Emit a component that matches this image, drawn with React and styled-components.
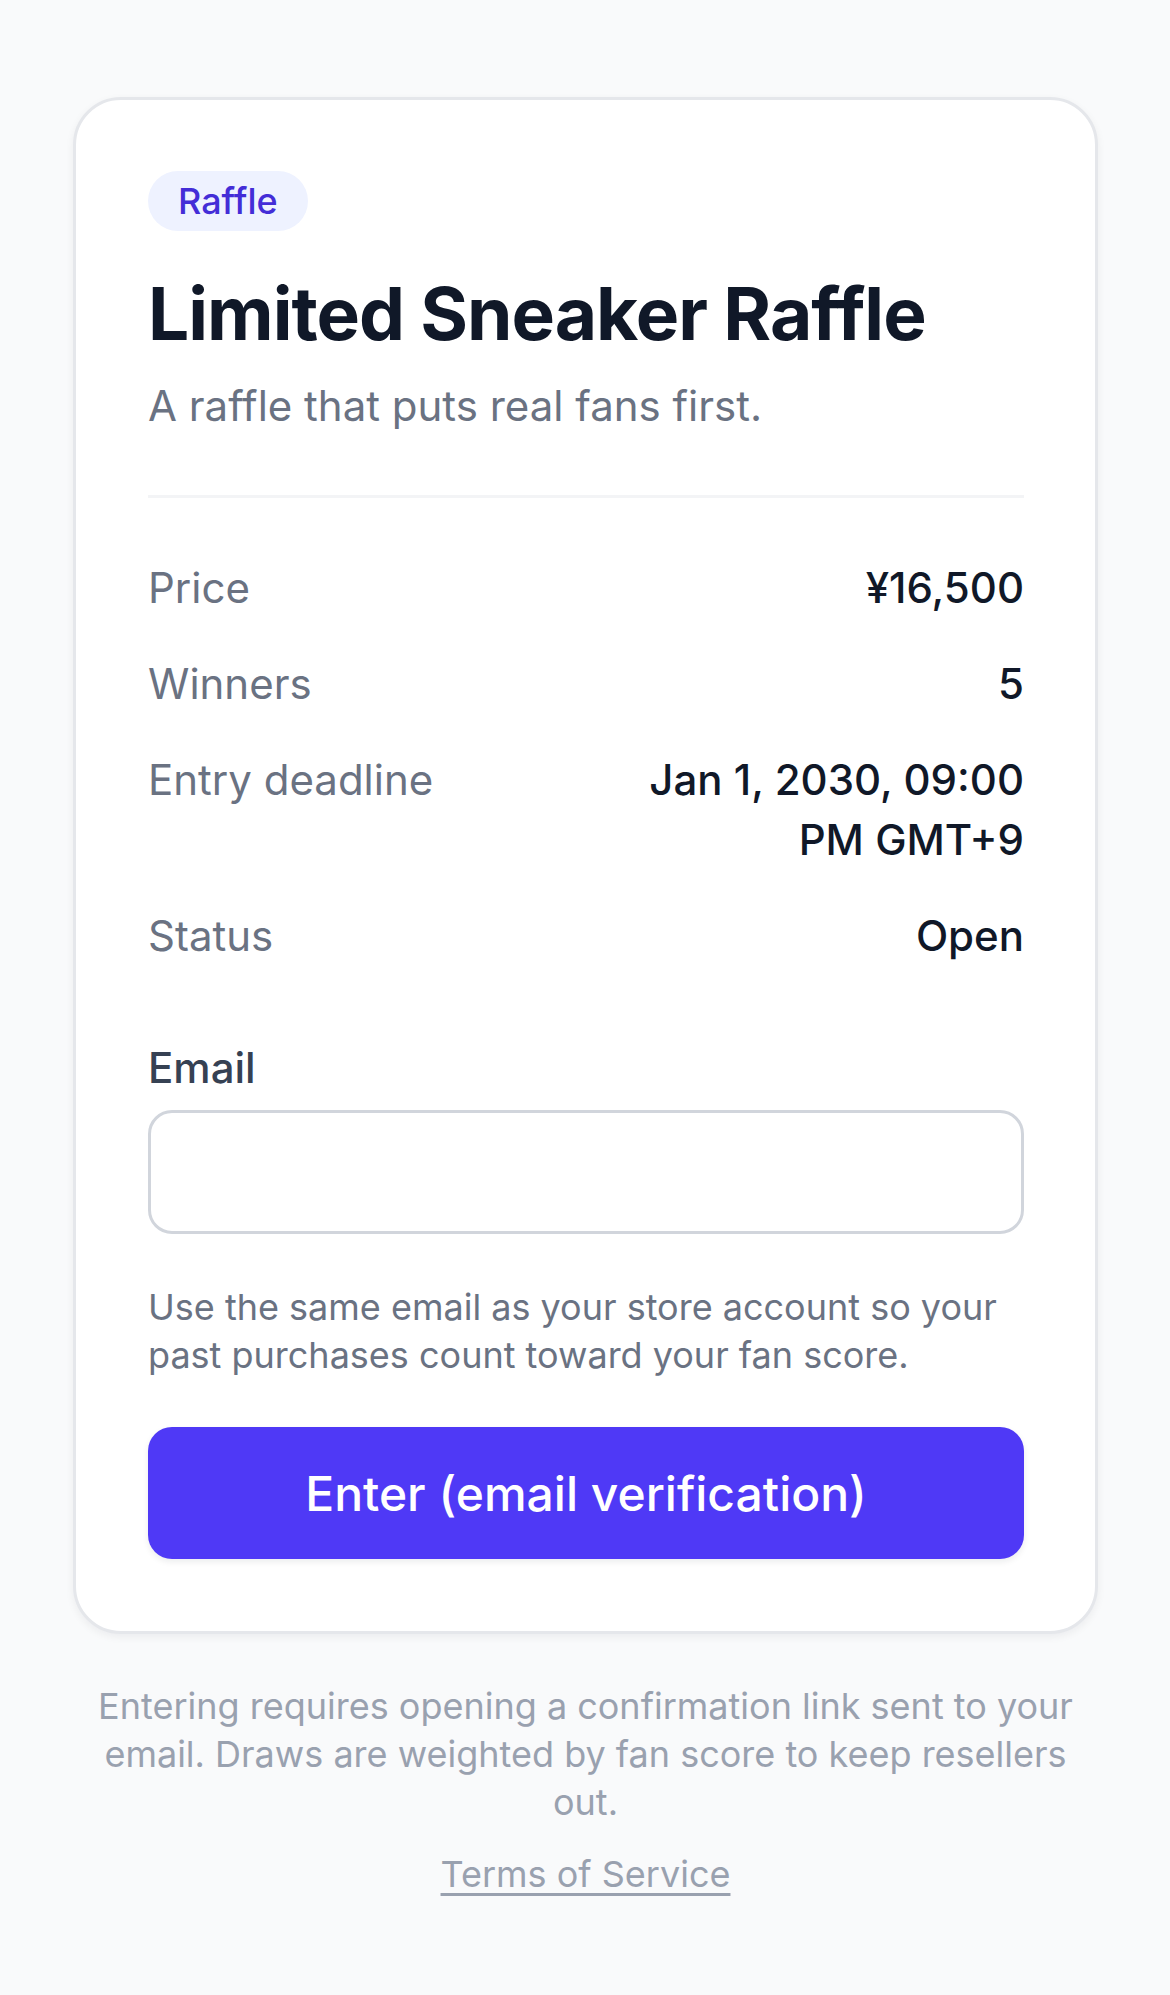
import styled, { createGlobalStyle } from "styled-components";

const rows = [
  { label: "Price", value: "¥16,500" },
  { label: "Winners", value: "5" },
  { label: "Entry deadline", value: "Jan 1, 2030, 09:00 PM GMT+9" },
  { label: "Status", value: "Open" },
];

export default function App() {
  return (
    <Page>
      <GlobalStyle />
      <Card>
        <Badge>Raffle</Badge>
        <Title>Limited Sneaker Raffle</Title>
        <Subtitle>A raffle that puts real fans first.</Subtitle>
        <Details>
          {rows.map((row) => (
            <Row key={row.label}>
              <Label>{row.label}</Label>
              <Value>{row.value}</Value>
            </Row>
          ))}
        </Details>
        <Form onSubmit={(e) => e.preventDefault()}>
          <FieldLabel htmlFor="email">Email</FieldLabel>
          <Input id="email" type="email" />
          <Hint>
            Use the same email as your store account so your past purchases
            count toward your fan score.
          </Hint>
          <Button type="submit">Enter (email verification)</Button>
        </Form>
      </Card>
      <Footer>
        <Note>
          Entering requires opening a confirmation link sent to your email.
          Draws are weighted by fan score to keep resellers out.
        </Note>
        <Terms href="#">Terms of Service</Terms>
      </Footer>
    </Page>
  );
}

const GlobalStyle = createGlobalStyle`
  body {
    margin: 0;
    background: #f9fafb;
    font-family: Inter, "Noto Sans", sans-serif;
  }
`;

const Page = styled.div`
  min-height: 1995px;
  box-sizing: border-box;
  padding: 97px 72px 0 73px;
  background: #f9fafb;
`;

const Card = styled.div`
  background: #ffffff;
  border: 3px solid #e5e7eb;
  border-radius: 48px;
  box-shadow: 0 3px 8px rgba(17, 24, 39, 0.06);
  padding: 71px 71px 72px 72px;
  display: flex;
  flex-direction: column;
  align-items: flex-start;
`;

const Badge = styled.span`
  display: inline-block;
  padding: 6px 30px;
  border-radius: 999px;
  background: #eef2ff;
  color: #432dd7;
  font-size: 36px;
  line-height: 48px;
  font-weight: 500;
`;

const Title = styled.h1`
  margin: 38px 0 0;
  color: #101828;
  font-size: 73px;
  line-height: 90px;
  font-weight: 700;
  letter-spacing: -1px;
`;

const Subtitle = styled.p`
  margin: 17px 0 0;
  color: #6a7282;
  font-size: 42px;
  line-height: 60px;
`;

const Details = styled.div`
  align-self: stretch;
  margin-top: 59px;
  padding-top: 60px;
  border-top: 3px solid #f3f4f6;
  display: flex;
  flex-direction: column;
  gap: 36px;
`;

const Row = styled.div`
  display: flex;
  justify-content: space-between;
  gap: 24px;
  font-size: 42px;
  line-height: 60px;
`;

const Label = styled.span`
  color: #6a7282;
  flex-shrink: 0;
`;

const Value = styled.span`
  color: #101828;
  font-weight: 500;
  text-align: right;
  max-width: 50%;
`;

const Form = styled.form`
  align-self: stretch;
  margin-top: 72px;
  display: flex;
  flex-direction: column;
`;

const FieldLabel = styled.label`
  color: #364153;
  font-size: 42px;
  line-height: 60px;
  font-weight: 500;
`;

const Input = styled.input`
  margin-top: 12px;
  height: 124px;
  box-sizing: border-box;
  border: 3px solid #d1d5dc;
  border-radius: 24px;
  padding: 0 36px;
  font-family: inherit;
  font-size: 42px;
  outline: none;
`;

const Hint = styled.p`
  margin: 49px 0 0;
  color: #6a7282;
  font-size: 36px;
  line-height: 48px;
`;

const Button = styled.button`
  margin-top: 48px;
  height: 132px;
  border: none;
  border-radius: 24px;
  background: #4f39f6;
  color: #ffffff;
  font-family: inherit;
  font-size: 48px;
  font-weight: 500;
  box-shadow: 0 3px 6px rgba(17, 24, 39, 0.08);
  cursor: pointer;
`;

const Footer = styled.div`
  display: flex;
  flex-direction: column;
  align-items: center;
  padding: 48px 24px 0;
`;

const Note = styled.p`
  margin: 0;
  text-align: center;
  color: #99a1af;
  font-size: 36px;
  line-height: 48px;
`;

const Terms = styled.a`
  margin-top: 24px;
  color: #99a1af;
  font-size: 36px;
  line-height: 48px;
  text-decoration: underline;
  text-underline-offset: 6px;
  text-decoration-thickness: 3px;
`;
